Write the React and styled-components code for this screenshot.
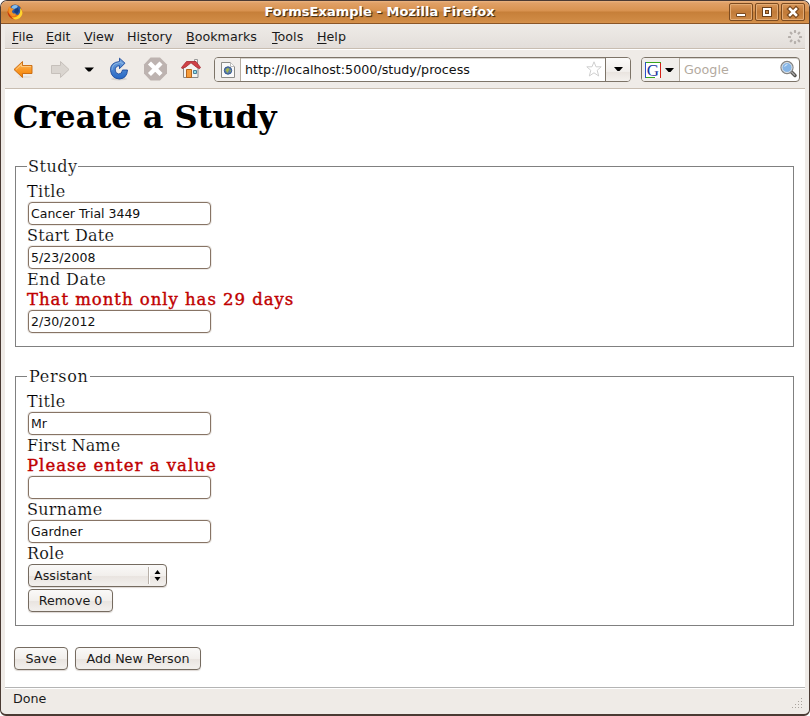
import React from "react";
import styled, { createGlobalStyle } from "styled-components";

const Global = createGlobalStyle`
  * { box-sizing: border-box; }
  body { margin: 0; background: #fff; }
`;

const Window = styled.div`
  width: 810px;
  height: 716px;
  display: flex;
  flex-direction: column;
  overflow: hidden;
  background: #efebe7;
  border: 1px solid #4a3a33;
  border-bottom-width: 2px;
  border-radius: 7px 7px 6px 6px;
  font: 12.7px/16px "DejaVu Sans", sans-serif;
  color: #1a1a1a;
`;

const TitleBar = styled.div`
  height: 23px;
  flex: none;
  display: flex;
  align-items: center;
  padding: 0 4px 0 6px;
  background: linear-gradient(#eab482 0, #e0a066 2px, #d8924f 10px, #c67f39 11px, #d08b45 20px, #d6924c 22px);
  border-bottom: 1px solid #8a5527;
  svg { flex: none; }
`;

const TitleText = styled.div`
  flex: 1;
  text-align: center;
  padding-left: 7px;
  font-weight: bold;
  font-size: 13px;
  letter-spacing: 0.03px;
  color: #fff;
  text-shadow: 1px 1px 1px #4d3216, 1px 1px 0 #5c3f20;
`;

const WindowButtons = styled.div`
  display: flex;
  gap: 2px;
`;

const WindowButton = styled.div`
  width: 24px;
  height: 18px;
  border: 1px solid #7c4b20;
  border-radius: 2px;
  box-shadow: inset 0 0 0 1px #e3ab74;
  background: linear-gradient(#d9975a, #c17a38 50%, #cf8b48);
  svg { display: block; }
`;

const MenuBar = styled.div`
  height: 25px;
  flex: none;
  margin: 0 4px;
  padding: 1px 2px 0 7px;
  display: flex;
  align-items: center;
  background: linear-gradient(#eeebe7, #e3deda);
  border-bottom: 1px solid #c8bdb1;
`;

const MenuItem = styled.div`
  width: ${(p) => p.$w}px;
  white-space: nowrap;
  u { text-underline-offset: 2px; }
`;

const Throbber = styled.svg`
  margin-left: auto;
`;

const ToolBar = styled.div`
  height: 40px;
  flex: none;
  margin: 0 4px;
  padding: 7px 4px 0 8px;
  display: flex;
  align-items: flex-start;
  background: #efebe7;
  border-top: 1px solid #fff;
  border-bottom: 1px solid #c8bdb1;
`;

const ToolIcons = styled.svg`
  flex: none;
  width: 201px;
  height: 26px;
`;

const Entry = styled.div`
  height: 25px;
  width: ${(p) => p.$w}px;
  margin-right: ${(p) => p.$gap || 0}px;
  display: flex;
  border: 1px solid #7d7468;
  border-radius: 4px;
  overflow: hidden;
  background: #fff;
  box-shadow: inset 0 1px 0 #d8d4ce;
`;

const EntryCell = styled.div`
  width: ${(p) => p.$w}px;
  display: flex;
  align-items: center;
  justify-content: center;
  background: #f1eeeb;
  border-right: 1px solid #b5aca0;
`;

const EntryText = styled.div`
  flex: 1;
  padding: 4px 0 0 4px;
  color: ${(p) => p.$color || "#111"};
  white-space: nowrap;
`;

const Star = styled.svg`
  margin: 3px 3px 0 0;
`;

const DropCell = styled.div`
  width: 25px;
  border-left: 1px solid #7d7468;
  display: flex;
  align-items: center;
  justify-content: center;
  background: linear-gradient(#fbfaf9, #f1eeeb 60%, #e9e4df 61%, #f4f1ee);
`;

const Page = styled.main`
  flex: 1;
  margin: 0 4px;
  padding: 9px 11px 0 8px;
  background: #fff;
  color: #000;
  font: 16px/20px "DejaVu Serif", serif;
`;

const Heading = styled.h1`
  margin: 0 0 20px;
  height: 38px;
  font-size: 32px;
  line-height: 38px;
`;

const Group = styled.fieldset`
  height: ${(p) => p.$h}px;
  margin: 0 0 19px 2px;
  padding: 5px 11px 0;
  border: 1px solid #808080;
`;

const Legend = styled.legend`
  height: 20px;
  padding: 1px 1px 0 ${(p) => p.$left || 1}px;
  letter-spacing: ${(p) => p.$track}px;
  -webkit-text-stroke: 0.17px #fff;
`;

const Label = styled.label`
  display: block;
  height: 20px;
  padding-top: 1px;
  letter-spacing: ${(p) => p.$track}px;
  -webkit-text-stroke: 0.17px #fff;
`;

const ErrorText = styled.div`
  height: 20px;
  padding-top: 1px;
  color: #c00000;
  font-size: 16.5px;
  letter-spacing: ${(p) => p.$track || 0}px;
  white-space: nowrap;
  -webkit-text-stroke: 0.4px #c00000;
`;

const Input = styled.input`
  display: block;
  width: 183px;
  height: 23px;
  margin: 1px 0 0 1px;
  padding: 0 2px;
  border: 1px solid #877465;
  border-radius: 4px;
  outline: 0;
  box-shadow: 0 0 0 1px #eeebe8;
  background: #fff;
  color: #111;
  font: 12.5px "DejaVu Sans", sans-serif;
  letter-spacing: ${(p) => p.$track || 0}px;
`;

const Button = styled.button`
  display: flex;
  align-items: center;
  justify-content: ${(p) => (p.$select ? "space-between" : "center")};
  width: ${(p) => p.$w}px;
  height: 23px;
  margin: ${(p) => p.$m || "0"};
  padding: ${(p) => (p.$select ? "0 4px 0 5px" : "0")};
  border: 1px solid #756b60;
  border-radius: 4px;
  background: linear-gradient(#faf9f8, #f2efec 50%, #e9e4e0 55%, #f1eeeb 90%);
  box-shadow: 0 1px 1px #ddd8d4;
  color: #1a1a1a;
  font: 12.7px "DejaVu Sans", sans-serif;
  white-space: nowrap;
`;

const Actions = styled.div`
  display: flex;
  gap: 7px;
  margin: 21px 0 0 1px;
`;

const StatusBar = styled.footer`
  height: 27px;
  flex: none;
  margin: 0 4px;
  padding: 3px 1px 0 8px;
  display: flex;
  justify-content: space-between;
  border-top: 1px solid #b4b4b4;
  box-shadow: inset 0 1px 0 #fff;
`;

const Caret = () => (
  <svg width="9" height="5" viewBox="0 0 9 5"><path d="M0 0h9L5.5 4h-2z" fill="#000" /></svg>
);

const FirefoxIcon = () => (
  <svg width="16" height="16" viewBox="0 0 16 16">
    <circle cx="8" cy="8" r="7.500" fill="#e87812" />
    <path d="M4 2q4-3 8 0 3 2 2 6l-3 3-5-1-3-4z" fill="#2c5ba6" />
    <path d="M5 2.500Q8 0 11 2L9.500 4 7 5 4.500 4z" fill="#86bdea" />
    <path d="M8 5l3-1 1 3-2 3-3-2z" fill="#193d7c" />
    <path d="M1.500 2.500L4 4l3 1-2 2q0 3 3.500 2.500 1 3-3.500 2.500L2 9z" fill="#f39126" />
    <path d="M13 4q3.500 3 2 7-2 4-6 4.500-4 0-6-2.500 4 1 7-.5Q14 10 13 4z" fill="#ffd42e" />
    <path d="M.5 7q0 5 4 7.500l3 1Q2.500 12 .5 7z" fill="#bf3212" />
  </svg>
);

const NavIcons = () => (
  <ToolIcons viewBox="13 57 201 26">
    <defs>
      <linearGradient id="orange" x2="0" y2="1"><stop stopColor="#ffc46c" /><stop offset=".5" stopColor="#fa9a2a" /><stop offset="1" stopColor="#f08000" /></linearGradient>
      <linearGradient id="blue" x2="0" y2="1"><stop stopColor="#79a9df" /><stop offset="1" stopColor="#2466c4" /></linearGradient>
    </defs>
    <ellipse cx="25" cy="77" rx="7" ry="1" fill="#000" opacity=".05" />
    <path d="M14 69.500l8.500-8v4h9.500v8H22.500v4z" fill="url(#orange)" stroke="#c8660a" strokeWidth=".9" strokeLinejoin="round" />
    <path d="M16 69.500l5.500-5v2h9.500" fill="none" stroke="#ffdda6" opacity=".6" />
    <path d="M69 69.500l-8.500-8v4H51.500v8h9v4z" fill="#dad5d0" stroke="#c6c0bb" strokeLinejoin="round" />
    <path d="M84.500 67.500h9.500l-3.800 4h-2z" fill="#000" />
    <ellipse cx="119" cy="79" rx="8" ry="1.500" fill="#000" opacity=".1" />
    <path d="M119.500 61.500Q110 62.500 110.500 70.500q1 8 9 8.500 7.500-.5 8-9h-5q-.5 4-3.800 4-3.500-.5-3.500-4 0-4 4.300-4.300v3l5.500-5.500-5.500-5z" fill="url(#blue)" stroke="#1c4a9c" strokeWidth=".9" strokeLinejoin="round" />
    <path d="M112 70q0-6 6-7l2-1 3 2" fill="none" stroke="#b5d3f2" opacity=".5" />
    <path d="M150.500 57.500h9.500l7 7v9l-7 7h-9.500l-6.500-7v-9z" fill="#bdb3b0" />
    <path d="M151 64.500l8.500 8.500m0-8.500l-8.500 8.500" stroke="#fff" strokeWidth="4.300" strokeLinecap="square" />
    <path d="M194.500 59.500h3v6h-3z" fill="#f5f5f5" stroke="#999" />
    <path d="M183.500 67v10.500h14.500V67l-7-5z" fill="#f3f3f1" stroke="#888" />
    <path d="M182 68.500l-.5-1 5-6h9.500l4.500 6-1 1.200-3-1.500-5.500-4.400-5.500 4.400z" fill="#cf4146" stroke="#a52a32" strokeWidth=".8" strokeLinejoin="round" />
    <path d="M186.500 69.500h5v8h-5z" fill="#f69d3c" stroke="#b5651d" />
    <path d="M193.500 70.500h3v3h-3z" fill="#8fe1ec" stroke="#4b7f9a" />
  </ToolIcons>
);

const menus = [
  ["F", "ile", 34], ["E", "dit", 38], ["V", "iew", 43], ["Hi", "tory", 59, "s"],
  ["B", "ookmarks", 86], ["T", "ools", 45], ["H", "elp", 40],
];

const Field = ({ label, track, error, errorTrack, value, valueTrack }) => (
  <>
    <Label $track={track}>{label}</Label>
    {error && <ErrorText $track={errorTrack}>{error}</ErrorText>}
    <Input defaultValue={value} $track={valueTrack} />
  </>
);

export default function App() {
  return (
    <>
      <Global />
      <Window>
        <TitleBar>
          <FirefoxIcon />
          <TitleText>FormsExample - Mozilla Firefox</TitleText>
          <WindowButtons>
            <WindowButton><svg width="22" height="16"><path d="M6.500 9.500h9v3h-9z" fill="#fff" stroke="#7c4b20" /></svg></WindowButton>
            <WindowButton><svg width="22" height="16" shapeRendering="crispEdges"><path d="M6 3h10v10H6z" fill="#6e421c" /><path d="M7 4h8v8H7z" fill="#fff" /><path d="M9 6h4v4H9z" fill="#6e421c" /><path d="M10 7h2v2h-2z" fill="#c9884a" /></svg></WindowButton>
            <WindowButton><svg width="22" height="16"><path d="M8 5l6 6m0-6l-6 6" stroke="#7c4b20" strokeWidth="5" strokeLinecap="square" /><path d="M8 5l6 6m0-6l-6 6" stroke="#fff" strokeWidth="2.500" strokeLinecap="square" /></svg></WindowButton>
          </WindowButtons>
        </TitleBar>
        <MenuBar>
          {menus.map(([a, b, w, mid]) => (
            <MenuItem key={a} $w={w}>{mid ? <>{a}<u>{mid}</u></> : <u>{a}</u>}{b}</MenuItem>
          ))}
          <Throbber width="16" height="16" viewBox="-8 -8 16 16">
            {[0, 45, 90, 135, 180, 225, 270, 315].map((r) => (
              <rect key={r} x="-1.100" y="-7" width="2.200" height="3" rx=".7" fill="#b5afab" transform={`rotate(${r})`} />
            ))}
          </Throbber>
        </MenuBar>
        <ToolBar>
          <NavIcons />
          <Entry $w={417} $gap={10}>
            <EntryCell $w={26}>
              <svg width="14" height="16"><path d="M.5.5h9l4 4v11H.5z" fill="#fafafa" stroke="#8c8c88" /><path d="M9.500.500v4h4" fill="#fff" stroke="#bbb" /><circle cx="7" cy="8.500" r="3.700" fill="#6080a8" stroke="#31568e" /><path d="M4.500 8l2-2 2 1-1 2-1 2zM9 9l1-1v2z" fill="#a6b84c" /></svg>
            </EntryCell>
            <EntryText>http://localhost:5000/study/process</EntryText>
            <Star width="16" height="16" viewBox="0 0 16 16"><path d="M8 .8l2 5h5.200l-4 3.500 1.500 5.700L8 11.800 3.300 15l1.500-5.700-4-3.500H6z" fill="#fff" stroke="#cfcfcf" strokeLinejoin="round" /></Star>
            <DropCell><Caret /></DropCell>
          </Entry>
          <Entry $w={159}>
            <EntryCell $w={38}>
              <svg width="31" height="16" viewBox="0 0 31 16"><path d="M0 0h16v16H0z" fill="#fff" /><path d="M0 .5h16M0 15.500h10" stroke="#39a51c" /><path d="M.5 0v16" stroke="#2950c8" /><path d="M15.500 1v15" stroke="#d52218" /><text x="1.800" y="13.500" fontFamily="Liberation Serif" fontSize="17" fill="#1b37a0">G</text><path d="M20 6h9l-3.500 4h-2z" fill="#000" /></svg>
            </EntryCell>
            <EntryText $color="#b3aaa0">Google</EntryText>
            <svg width="20" height="22" viewBox="0 0 20 22"><path d="M11.500 13l4.500 4.500" stroke="#55534f" strokeWidth="3.500" strokeLinecap="round" /><path d="M11.500 13l4.500 4.500" stroke="#aaa" strokeWidth="1.200" /><circle cx="8" cy="9.500" r="6" fill="#86b5e6" stroke="#858380" strokeWidth="1.300" /><circle cx="8" cy="9.500" r="5" fill="none" stroke="#e3e3e3" /><path d="M5 9q1-3 4-3l-2 2z" fill="#d4e8fb" /></svg>
          </Entry>
        </ToolBar>
        <Page>
          <Heading>Create a Study</Heading>
          <Group $h={191}>
            <Legend $track={0.5}>Study</Legend>
            <Field label="Title" track={0.35} value="Cancer Trial 3449" />
            <Field label="Start Date" track={0.3} value="5/23/2008" valueTrack={0.05} />
            <Field label="End Date" track={0.45} error="That month only has 29 days" errorTrack={0.97} value="2/30/2012" valueTrack={0.05} />
          </Group>
          <Group $h={260}>
            <Legend $track={0.7} $left={2}>Person</Legend>
            <Field label="Title" track={0.35} value="Mr" />
            <Field label="First Name" track={0.15} error="Please enter a value" errorTrack={1.02} value="" />
            <Field label="Surname" track={0.3} value="Gardner" valueTrack={0.1} />
            <Label $track={0.2}>Role</Label>
            <Button $select $w={139} $m="1px 0 0 1px">
              Assistant
              <svg width="14" height="17"><path d="M.5 0v17" stroke="#b8b0a8" /><path d="M1.500 0v17" stroke="#fff" /><path d="M9.500 3l3 4h-6zM9.500 14l3-4h-6z" fill="#000" /></svg>
            </Button>
            <Button $w={85} $m="2px 0 0 1px">Remove 0</Button>
          </Group>
          <Actions>
            <Button $w={54}>Save</Button>
            <Button $w={126}>Add New Person</Button>
          </Actions>
        </Page>
        <StatusBar>
          <span>Done</span>
          <svg width="12" height="22"><g fill="#aaa49e"><path d="M9 7h1v1h-1zM9 10h1v1h-1zM6 10h1v1h-1zM9 13h1v1h-1zM6 13h1v1h-1zM3 13h1v1h-1zM9 16h1v1h-1zM6 16h1v1h-1zM3 16h1v1h-1zM0 16h1v1h-1z" /></g></svg>
        </StatusBar>
      </Window>
    </>
  );
}
